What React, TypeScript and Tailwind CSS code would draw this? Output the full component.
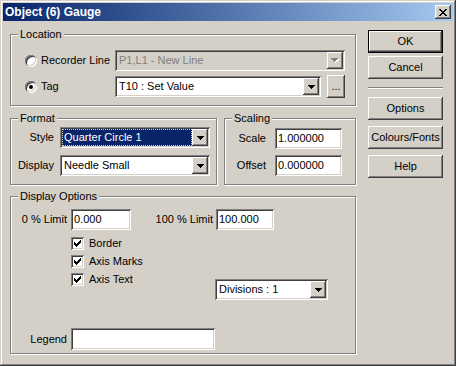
import type { ReactNode } from 'react';

const raised =
  'shadow-[inset_-1px_-1px_0_#404040,inset_1px_1px_0_#ffffff,inset_-2px_-2px_0_#808080,inset_2px_2px_0_#d4d0c8]';
const sunken =
  'shadow-[inset_1px_1px_0_#808080,inset_-1px_-1px_0_#ffffff,inset_2px_2px_0_#404040,inset_-2px_-2px_0_#d4d0c8]';

const ARROW = ['XXXXXXX', '.XXXXX.', '..XXX..', '...X...'];
const CLOSE = ['XX....XX', '.XX..XX.', '..XXXX..', '...XX...', '..XXXX..', '.XX..XX.', 'XX....XX'];
const CHECK = ['......X', '.....XX', 'X...XXX', 'XX.XXX.', 'XXXXX..', '.XXX...', '..X....'];

// little pixel glyphs, like the old win32 bitmaps
function Pixels({ rows, color = '#000', shadow }: { rows: string[]; color?: string; shadow?: string }) {
  const w = rows[0].length + (shadow ? 1 : 0);
  const h = rows.length + (shadow ? 1 : 0);
  const cells = (fill: string, off: number) =>
    rows.flatMap((r, y) =>
      r.split('').map((c, x) =>
        c === 'X' ? <rect key={`${fill}-${x}-${y}`} x={x + off} y={y + off} width={1} height={1} fill={fill} /> : null
      )
    );
  return (
    <svg width={w} height={h} shapeRendering="crispEdges" className="block">
      {shadow && cells(shadow, 1)}
      {cells(color, 0)}
    </svg>
  );
}

function Group({ title, className, children }: { title: string; className?: string; children: ReactNode }) {
  return (
    <fieldset className={`border border-[#808080] shadow-[inset_1px_1px_0_#ffffff,1px_1px_0_#ffffff] ${className ?? ''}`}>
      <legend className="ml-[7px] px-[2px] bg-[#d4d0c8] leading-[13px]">{title}</legend>
      {children}
    </fieldset>
  );
}

function Combo({ value, className, selected, disabled }: { value: string; className: string; selected?: boolean; disabled?: boolean }) {
  return (
    <div className={`flex h-[21px] p-[2px] ${sunken} ${disabled ? 'bg-[#d4d0c8]' : 'bg-white'} ${className}`}>
      {selected ? (
        <div className="flex-1 flex items-center pl-[1px] bg-[#0a246a] text-white border border-dotted border-[#d8d49a]">
          {value}
        </div>
      ) : (
        <div className={`flex-1 flex items-center pl-[2px] ${disabled ? 'text-[#808080]' : ''}`}>{value}</div>
      )}
      <div className={`w-[16px] h-[17px] bg-[#d4d0c8] flex items-center justify-center ${raised}`}>
        {disabled ? <Pixels rows={ARROW} color="#808080" shadow="#ffffff" /> : <Pixels rows={ARROW} />}
      </div>
    </div>
  );
}

function Edit({ value, className }: { value: string; className: string }) {
  return <div className={`flex items-center h-[21px] pl-[3px] bg-white ${sunken} ${className}`}>{value}</div>;
}

function Radio({ checked }: { checked?: boolean }) {
  return (
    <div className={`w-[12px] h-[12px] rounded-full bg-white flex items-center justify-center ${sunken}`}>
      {checked && <div className="w-[4px] h-[4px] rounded-full bg-black" />}
    </div>
  );
}

function Check({ label }: { label: string }) {
  return (
    <div className="flex items-center gap-[5px] h-[13px]">
      <div className={`w-[13px] h-[13px] bg-white flex items-center justify-center ${sunken}`}>
        <Pixels rows={CHECK} />
      </div>
      <span>{label}</span>
    </div>
  );
}

function Btn({ children, isDefault, className }: { children: ReactNode; isDefault?: boolean; className?: string }) {
  return (
    <button
      className={`w-[75px] h-[23px] bg-[#d4d0c8] flex items-center justify-center ${raised} ${isDefault ? 'border border-black' : ''} ${className ?? ''}`}
    >
      {children}
    </button>
  );
}

export default function App() {
  return (
    <div className="w-[456px] h-[366px] bg-[#d4d0c8] p-[3px] flex flex-col font-['Liberation_Sans',Arial,sans-serif] text-[11px] leading-[13px] text-black shadow-[inset_-1px_-1px_0_#404040,inset_1px_1px_0_#d4d0c8,inset_-2px_-2px_0_#808080,inset_2px_2px_0_#ffffff]">
      <div className="h-[18px] flex items-center justify-between px-[2px] bg-linear-to-r from-[#0a246a] to-[#a6caf0]">
        <span className="font-bold text-white text-[12px]">Object (6) Gauge</span>
        <button className={`w-[16px] h-[14px] bg-[#d4d0c8] flex items-center justify-center ${raised}`}>
          <Pixels rows={CLOSE} />
        </button>
      </div>

      <div className="flex pl-[7px]">
        <div className="w-[346px] pt-[7px] flex flex-col">
          <Group title="Location" className="h-[78px]">
            <div className="flex flex-col pl-[14px]">
              <div className="flex items-center h-[21px] mt-[9px]">
                <div className="w-[90px] flex items-center gap-[4px]">
                  <Radio />
                  <span>Recorder Line</span>
                </div>
                <Combo value="P1,L1 - New Line" className="w-[230px]" disabled />
              </div>
              <div className="flex items-center h-[21px] mt-[5px]">
                <div className="w-[90px] flex items-center gap-[4px]">
                  <Radio checked />
                  <span>Tag</span>
                </div>
                <Combo value="T10 : Set Value" className="w-[206px]" />
                <button className={`ml-[6px] w-[18px] h-[23px] shrink-0 bg-[#d4d0c8] flex items-center justify-center ${raised}`}>
                  ...
                </button>
              </div>
            </div>
          </Group>

          <div className="flex gap-[7px] mt-[6px]">
            <Group title="Format" className="w-[207px] h-[73px]">
              <div className="flex flex-col gap-[7px] mt-[2px]">
                <div className="flex items-center gap-[6px]">
                  <span className="w-[43px] text-right">Style</span>
                  <Combo value="Quarter Circle 1" className="w-[150px]" selected />
                </div>
                <div className="flex items-center gap-[6px]">
                  <span className="w-[43px] text-right">Display</span>
                  <Combo value="Needle Small" className="w-[150px]" />
                </div>
              </div>
            </Group>
            <Group title="Scaling" className="w-[132px] h-[73px]">
              <div className="flex flex-col gap-[6px] mt-[3px]">
                <div className="flex items-center gap-[9px]">
                  <span className="w-[41px] text-right">Scale</span>
                  <Edit value="1.000000" className="w-[67px]" />
                </div>
                <div className="flex items-center gap-[9px]">
                  <span className="w-[41px] text-right">Offset</span>
                  <Edit value="0.000000" className="w-[67px]" />
                </div>
              </div>
            </Group>
          </div>

          <Group title="Display Options" className="h-[164px] mt-[5px]">
            <div className="flex flex-col">
              <div className="flex items-center mt-[6px]">
                <span className="w-[56px] text-right">0 % Limit</span>
                <Edit value="0.000" className="w-[60px] ml-[4px]" />
                <span className="w-[82px] text-right">100 % Limit</span>
                <Edit value="100.000" className="w-[58px] ml-[3px]" />
              </div>
              <div className="flex items-start mt-[7px]">
                <div className="ml-[60px] w-[144px] flex flex-col gap-[5px]">
                  <Check label="Border" />
                  <Check label="Axis Marks" />
                  <Check label="Axis Text" />
                </div>
                <Combo value="Divisions : 1" className="w-[113px] mt-[42px]" />
              </div>
              <div className="flex items-center mt-[28px]">
                <span className="w-[56px] text-right">Legend</span>
                <Edit value="" className="w-[144px] h-[22px] ml-[4px]" />
              </div>
            </div>
          </Group>
        </div>

        <div className="w-[75px] ml-[12px] pt-[9px] flex flex-col">
          <Btn isDefault>OK</Btn>
          <Btn className="mt-[3px]">Cancel</Btn>
          <div className="h-[2px] mt-[8px] border-t border-t-[#808080] border-b border-b-white" />
          <Btn className="mt-[8px]">Options</Btn>
          <Btn className="mt-[6px]">Colours/Fonts</Btn>
          <Btn className="mt-[6px]">Help</Btn>
        </div>
      </div>
    </div>
  );
}
